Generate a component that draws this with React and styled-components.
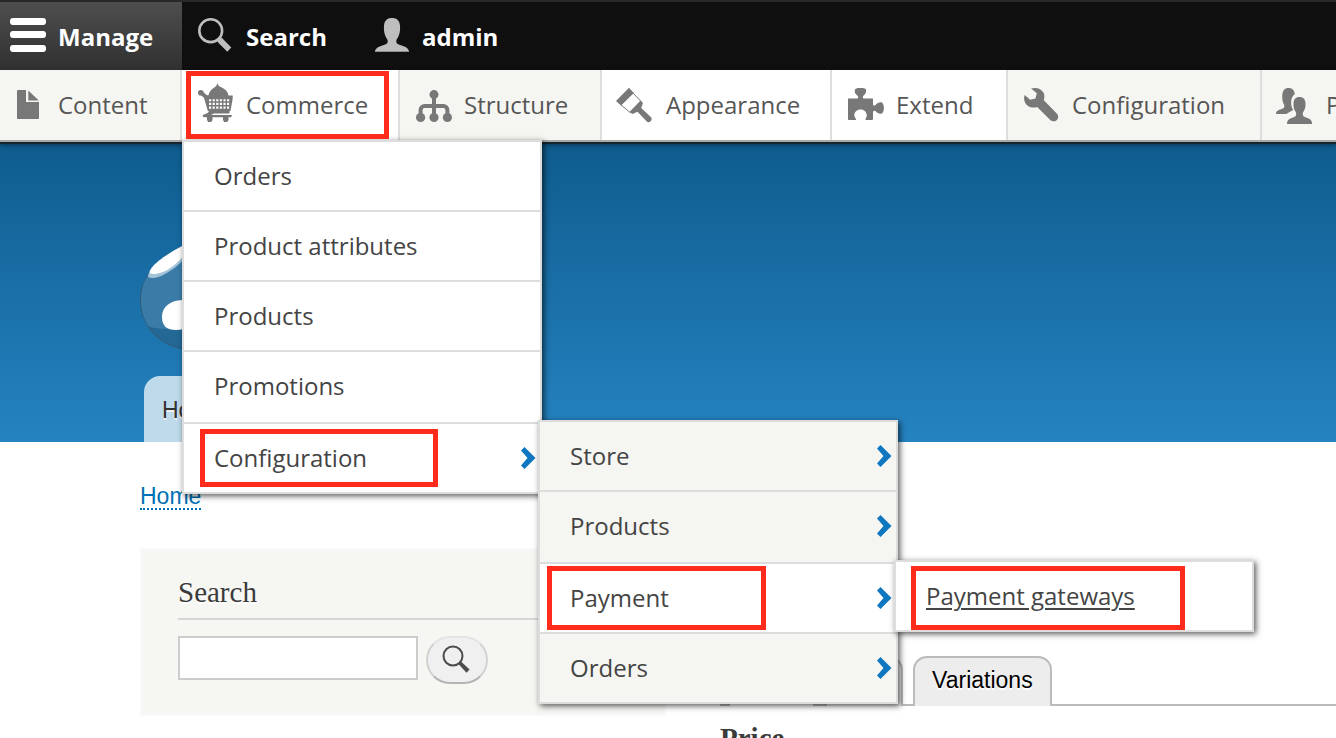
import React from "react";
import styled, { createGlobalStyle, css } from "styled-components";

const UI = '"Open Sans", "Noto Sans", sans-serif';
const SANS = '"Liberation Sans", Arial, sans-serif';
const SERIF = '"Liberation Serif", Georgia, serif';

const GlobalStyle = createGlobalStyle`
  *, *::before, *::after { box-sizing: border-box; }
  html { overflow-x: hidden; scrollbar-width: none; }
  body { margin: 0; background: #fff; color: #3b3b3b; font-family: ${SANS}; font-size: 23px; }
  ul { list-style: none; margin: 0; padding: 0; }
  a { text-decoration: none; }
`;

/* Administration toolbar */
const Toolbar = styled.div`
  position: relative;
  z-index: 10;
  font-family: ${UI};
  font-size: 24px;
  line-height: 32px;
`;

const Bar = styled.nav`
  display: flex;
  height: 70px;
  background: #0f0f0f;
  border-top: 2px solid #282828;
`;

const BarTab = styled.a`
  display: flex;
  align-items: center;
  gap: 12px;
  flex: 0 0 ${(p) => p.$basis}px;
  padding: 2px 0 0 ${(p) => (p.$active ? 10 : 16)}px;
  color: #fff;
  font-weight: 700;
  ${(p) =>
    p.$active &&
    css`
      background: linear-gradient(#4e4e4e, #303030);
    `}
`;

const Icon = styled.svg`
  flex: none;
  width: 36px;
  height: 36px;
  overflow: visible;
`;

const Tray = styled.ul`
  display: flex;
  height: 72px;
  background: #fff;
  border-bottom: 2px solid #a9a9a9;
  box-shadow: 0 2px 0 #16242e, 0 3px 5px rgba(0, 0, 0, 0.45);
`;

const TrayItem = styled.li`
  position: relative;
  flex: 0 0 ${(p) => p.$basis}px;
  background: ${(p) => (p.$shaded ? "#f5f5f1" : "#fff")};
  border-right: 2px solid #ddd;
  ${(p) =>
    p.$last &&
    css`
      flex: 1 1 0;
      min-width: 0;
      overflow: hidden;
      border-right: 0;
    `}
`;

const TrayLink = styled.a`
  display: flex;
  align-items: center;
  gap: 12px;
  height: 70px;
  padding-left: ${(p) => (p.$first ? 10 : 16)}px;
  color: #565656;
  white-space: nowrap;
`;

const Menu = styled.ul`
  position: absolute;
  z-index: 1;
  top: ${(p) => (p.$nested ? "-4px" : "100%")};
  left: ${(p) => (p.$nested ? "354px" : "0")};
  width: 360px;
  border: 2px solid #ddd;
  border-bottom: 0;
  box-shadow: 2px 2px 6px rgba(0, 0, 0, 0.65);
`;

const MenuItem = styled.li`
  position: relative;
  height: ${(p) => (p.$tall ? 72 : 70)}px;
  background: ${(p) => (p.$shaded ? "#f5f5f1" : "#fff")};
  border-bottom: 2px solid #ddd;
`;

const MenuLink = styled.a`
  display: flex;
  align-items: center;
  justify-content: space-between;
  height: 68px;
  padding: 0 4px 0 30px;
  color: #444;
`;

const LinkText = styled.span`
  ${(p) =>
    p.$underlined &&
    css`
      text-decoration: underline;
      text-decoration-thickness: 2px;
      text-underline-offset: 3px;
    `}
`;

/* Red outline laid over a highlighted step */
const Highlight = styled.span`
  position: absolute;
  z-index: 2;
  top: ${(p) => p.$top}px;
  left: ${(p) => p.$left}px;
  width: ${(p) => p.$width}px;
  height: ${(p) => p.$height}px;
  border: 5px solid #ff2b1d;
  pointer-events: none;
`;

/* Site */
const Header = styled.header`
  padding: 78px 0 0 140px;
  background: linear-gradient(#0f5c8e, #2583c1);
`;

const Logo = styled.svg`
  display: block;
  width: 106px;
  height: 130px;
`;

const SiteTab = styled.a`
  display: inline-flex;
  height: 66px;
  margin: 26px 0 0 4px;
  padding: 20px 18px 0;
  background: #bfdaeb;
  border-radius: 16px 16px 0 0;
  color: #333;
  line-height: 28px;
  text-shadow: 0 2px 0 #eee;
  vertical-align: top;
`;

const Breadcrumb = styled.nav`
  padding: 42px 0 0 140px;
  line-height: 24px;

  a {
    display: inline-block;
    color: #0071b3;
    border-bottom: 2px dotted #0071b3;
    vertical-align: top;
  }
`;

const Columns = styled.div`
  display: flex;
  align-items: flex-start;
  gap: 54px;
  padding: 38px 0 0 140px;
`;

const Block = styled.aside`
  flex: 0 0 526px;
  height: 168px;
  padding: 26px 36px 0;
  background: #f6f6f2;
  border: 2px solid #f9f9f9;
`;

const BlockTitle = styled.h2`
  margin: 0 0 16px;
  padding-bottom: 10px;
  border-bottom: 2px solid #d6d6d6;
  font: 400 29px/32px ${SERIF};
  text-shadow: 0 2px 0 #fff;
`;

const SearchForm = styled.form`
  display: flex;
  gap: 8px;
`;

const SearchInput = styled.input`
  width: 240px;
  height: 44px;
  border: 2px solid #ccc;
  border-radius: 0;
  background: #fff;
  font: 23px ${SANS};
`;

const SearchButton = styled.button`
  display: flex;
  align-items: center;
  justify-content: center;
  width: 62px;
  height: 48px;
  padding: 0 2px 2px 0;
  background: #f0f0f0;
  border: 2px solid;
  border-color: #e4e4e4 #d2d2d2 #b4b4b4;
  border-radius: 24px;
`;

const Main = styled.main`
  flex: 1;
  min-width: 0;
  padding-top: 43px;
`;

const PageTitle = styled.h1`
  margin: 0 0 25px;
  color: #000;
  font: 400 39px/40px ${SANS};
`;

const Tabs = styled.ul`
  display: flex;
  gap: 10px;
  padding-left: 8px;
  border-bottom: 2px solid #bbb;
`;

const Tab = styled.li`
  height: 50px;
  margin-bottom: -2px;
  padding: 8px 17px 0;
  background: ${(p) => (p.$active ? "#fff" : "#ededed")};
  border: 2px solid #bbb;
  border-bottom: 0;
  border-radius: 14px 14px 0 0;
  line-height: 28px;

  a {
    color: #000;
    text-shadow: 0 2px 0 #fff;
  }
`;

const FieldLabel = styled.h3`
  margin: 16px 0 0;
  font: 700 29px/32px ${SERIF};
`;

const Burger = () => (
  <Icon viewBox="0 0 36 36" fill="#fff" aria-hidden="true">
    <rect y="-1" width="36" height="7" rx="3" />
    <rect y="12" width="36" height="7" rx="3" />
    <rect y="26" width="36" height="7" rx="3" />
  </Icon>
);

const Magnifier = () => (
  <Icon viewBox="0 0 36 36" aria-hidden="true">
    <circle cx="12.7" cy="11.7" r="11.4" fill="none" stroke="#bebebe" strokeWidth="2.6" />
    <path d="M19 21l3-3 2.500 1.500 8.800 9-4 4.200-9-9z" fill="#bebebe" />
  </Icon>
);

const Person = () => (
  <Icon viewBox="0 0 36 36" aria-hidden="true">
    <path
      d="M1 33c0-4 4-5.500 9-7 3-1 4-2 3.600-5C10.500 17 9.500 12 10 6.500 10.500 1.500 13 -1 18-1s7.500 2.500 8 7.500c.5 5.500-.5 10.500-3.600 14.500-.4 3 .6 4 3.600 5 5 1.500 9 3 9 7z"
      fill="#bebebe"
    />
    <path d="M1 32h34v1H1z" fill="#8e8e8e" />
  </Icon>
);

const glyphs = {
  content: (
    <>
      <path d="M8 3h8v12h13v16a1 1 0 0 1-1 1H8a1 1 0 0 1-1-1V4a1 1 0 0 1 1-1z" />
      <path d="M18.300 3.500L28.800 13.500H18.300z" />
    </>
  ),
  commerce: (
    <>
      <circle cx="2.800" cy="5.800" r="2.800" />
      <path d="M2 7.500L4.500 4.500 9 8.300h1.600C11 5 13 2.500 16 .7c2-1.200 3-2.400 3.300-4.700.5 2.500 2 3.300 4.500 4.600C27.500 2.500 30 5 30.500 8.600h4.200v3L32.500 24H9.800L6 10.800z" />
      <path d="M11 24l-1 1.800-5 2.300c-1 1 .2 2.200 1.500 2.200H33l1.200-2.300H13l3-1.500h15.500V24z" />
      <path d="M9 29.500h5.500V33l-1.300 2h-3L9 33zM25 29.500h5.500V33l-1.300 2h-3L25 33z" />
      <path
        d="M11 13.200h21M11 16.900h20.500M11 20.600h20.500"
        fill="none"
        stroke="#fff"
        strokeWidth="2.100"
        strokeDasharray="2.200 1.400"
      />
    </>
  ),
  structure: (
    <>
      <circle cx="18" cy="7.600" r="4.500" />
      <circle cx="4.600" cy="30.500" r="4.600" />
      <circle cx="18" cy="30.500" r="4.600" />
      <circle cx="31.400" cy="30.500" r="4.600" />
      <path d="M18 8v22M4.600 30v-7a4 4 0 0 1 4-4h18.800a4 4 0 0 1 4 4v7" fill="none" stroke="#787878" strokeWidth="4" />
    </>
  ),
  appearance: (
    <>
      <path d="M14.800 5.800L23 14.500 12.200 25.500 3 18z" fill="#fff" stroke="#787878" strokeWidth="1" />
      <path d="M11 .8L15.800 6 3 18.600-2 14z" />
      <path d="M22.500 13.500L25 16l-1.800 5L32.500 29.800a3 3 0 0 1-4 4.500L19.500 24.800 14.500 27 11.500 25z" />
    </>
  ),
  extend: (
    <path d="M0 11.500h9.500c1.200-1 1-2-.5-3.300C7 6.800 6.300 5 7 2.500 8 .6 17 .6 18 2.500c.6 2.500-.5 4.500-2.200 5.700-1.300 1.200-1.300 2.300-.3 3.300h9.500v6.200c.5 1 1.500 1.300 2.500.3C29.500 15.700 32 14.800 34 15.500c2.500 1.800 2.600 9 0 11-2.300.8-4.500 0-6.300-2.200-1-.8-2-.5-2.700.5v7c0 .8-.5 1.200-1.200 1.200h-6.300c-.3-1.500 1-2.300 1.300-4.200.2-3.600-2.800-6.300-6.300-6.300S6 25.200 6.300 28.800C6.600 30.500 8.300 31.500 8 33H1c-.6 0-1-.4-1-1z" />
  ),
  configuration: (
    <path d="M7 1.600C12-.2 17.500 1.600 19.700 6c1 2.500.9 4.600.1 7.200L33 26.700c3.600 4.600-2 10-6.500 6.500L13.200 20C8 21.800 2.500 19.600.7 14.800-.1 12.500-.1 10.300.7 8l5.500 4.700 5.300-1.200 1.300-5.200z" />
  ),
  people: (
    <>
      <path d="M-2 27c0-3 2.500-4 5.500-5 2.500-.8 3-1.500 2.800-4C4.600 15.500 4 12 4.300 8 4.600 3.500 6.800 1 10.500 1s5.700 2 6.300 6c-3 2.500-4 6-3.600 10.500.2 2 1 4 2 5.500L13.300 24l-5 3z" />
      <path d="M9 37c0-4 2-5.500 6-6.500 3-1 3.500-2 3-5-2-3-2.800-6-2.500-9.500.3-4 2.500-6 6-6s5.700 2 6 6c.3 3.500-.5 6.500-2.500 9.500-.5 3 0 4 3 5 4 1 6 2.500 6 6.500z" />
    </>
  ),
};

const Glyph = ({ name }) => (
  <Icon viewBox="0 0 36 36" fill="#787878" aria-hidden="true">
    {glyphs[name]}
  </Icon>
);

const Chevron = () => (
  <svg width="16" height="22" viewBox="0 0 16 22" aria-hidden="true">
    <path d="M4.500 0L15.500 11 4.500 22 1 18.500 7.500 11 1 3.500z" fill="#0f77c0" />
  </svg>
);

const Entry = ({ label, shaded, tall, arrow, underlined, highlight, children }) => (
  <MenuItem $shaded={shaded} $tall={tall}>
    <MenuLink href="#">
      <LinkText $underlined={underlined}>{label}</LinkText>
      {arrow && <Chevron />}
    </MenuLink>
    {highlight && <Highlight $left={highlight[0]} $top={highlight[1]} $width={highlight[2]} $height={highlight[3]} />}
    {children}
  </MenuItem>
);

const TrayEntry = ({ label, icon, basis, shaded, first, last, children }) => (
  <TrayItem $basis={basis} $shaded={shaded} $last={last}>
    <TrayLink href="#" $first={first}>
      <Glyph name={icon} />
      {label}
    </TrayLink>
    {children}
  </TrayItem>
);

const DropLogo = () => (
  <Logo viewBox="0 0 106 130" role="img" aria-label="Site logo">
    <path
      d="M43 26C28 34 18 40 10 52 3 62 .5 70 .5 80c0 26 20 49.500 52 49.500S105.500 106 105.500 80C105.500 62 96 48 82 38 70 30 60 22 56 4c-3 12-6 18-13 22z"
      fill="#246896"
      stroke="#335a75"
    />
    <path d="M43 27C28 34 18 40 10 52 3 62 1 70 1 80c0 11 3 19 7 26 12 5 32 2 46 2h44c12-28 4-54-16-69C70 31 60 24 56 10c-3 10-7 14-13 17z" fill="#3a7ba7" />
    <path d="M46 26C28 34 8 47 8 57c8 5 28-8 38-20z" fill="#a3c3d8" />
    <path d="M46 24C28 33 18 41 14 45c-6 7-6 9 1 9 11-1 23-10 31-22z" fill="#fff" />
    <path d="M22 97c0-11 9-17 22-17 10 0 14 8 20 8s10-8 18-8c6 0 8 8 8 16s-6 14-14 14-10-8-18-8-10 8-22 8c-9 0-14-4-14-13z" fill="#fff" />
  </Logo>
);

export default function App() {
  return (
    <>
      <GlobalStyle />
      <Toolbar>
        <Bar aria-label="Toolbar">
          <BarTab href="#" $active $basis={182}>
            <Burger />
            Manage
          </BarTab>
          <BarTab href="#" $basis={176}>
            <Magnifier />
            Search
          </BarTab>
          <BarTab href="#" $basis={160}>
            <Person />
            admin
          </BarTab>
        </Bar>
        <Tray>
          <TrayEntry label="Content" icon="content" basis={182} shaded first />
          <TrayEntry label="Commerce" icon="commerce" basis={218}>
            <Highlight $left={4} $top={1} $width={203} $height={68} />
            <Menu>
              <Entry label="Orders" />
              <Entry label="Product attributes" />
              <Entry label="Products" />
              <Entry label="Promotions" tall />
              <Entry label="Configuration" arrow highlight={[16, 5, 238, 58]}>
                <Menu $nested>
                  <Entry label="Store" shaded arrow />
                  <Entry label="Products" shaded arrow tall />
                  <Entry label="Payment" arrow highlight={[7, 2, 219, 64]}>
                    <Menu $nested>
                      <Entry label="Payment gateways" underlined highlight={[15, 4, 274, 64]} />
                    </Menu>
                  </Entry>
                  <Entry label="Orders" shaded arrow />
                </Menu>
              </Entry>
            </Menu>
          </TrayEntry>
          <TrayEntry label="Structure" icon="structure" basis={202} shaded />
          <TrayEntry label="Appearance" icon="appearance" basis={230} />
          <TrayEntry label="Extend" icon="extend" basis={176} />
          <TrayEntry label="Configuration" icon="configuration" basis={254} shaded />
          <TrayEntry label="People" icon="people" shaded last />
        </Tray>
      </Toolbar>

      <Header>
        <DropLogo />
        <SiteTab href="#">Home</SiteTab>
      </Header>
      <Breadcrumb aria-label="Breadcrumb">
        <a href="#">Home</a>
      </Breadcrumb>
      <Columns>
        <Block>
          <BlockTitle>Search</BlockTitle>
          <SearchForm>
            <SearchInput type="text" aria-label="Search" />
            <SearchButton type="button" aria-label="Search">
              <svg width="28" height="28" viewBox="0 0 28 28" aria-hidden="true">
                <circle cx="11" cy="11" r="9.500" fill="none" stroke="#4c4c4c" strokeWidth="2" />
                <path d="M16 18.500l2.500-2.500 9 8.500-3 3.200z" fill="#4c4c4c" />
              </svg>
            </SearchButton>
          </SearchForm>
        </Block>
        <Main>
          <PageTitle>Commerce mug</PageTitle>
          <Tabs>
            <Tab $active>
              <a href="#">View</a>
            </Tab>
            <Tab>
              <a href="#">Edit</a>
            </Tab>
            <Tab>
              <a href="#">Variations</a>
            </Tab>
          </Tabs>
          <FieldLabel>Price</FieldLabel>
        </Main>
      </Columns>
    </>
  );
}
